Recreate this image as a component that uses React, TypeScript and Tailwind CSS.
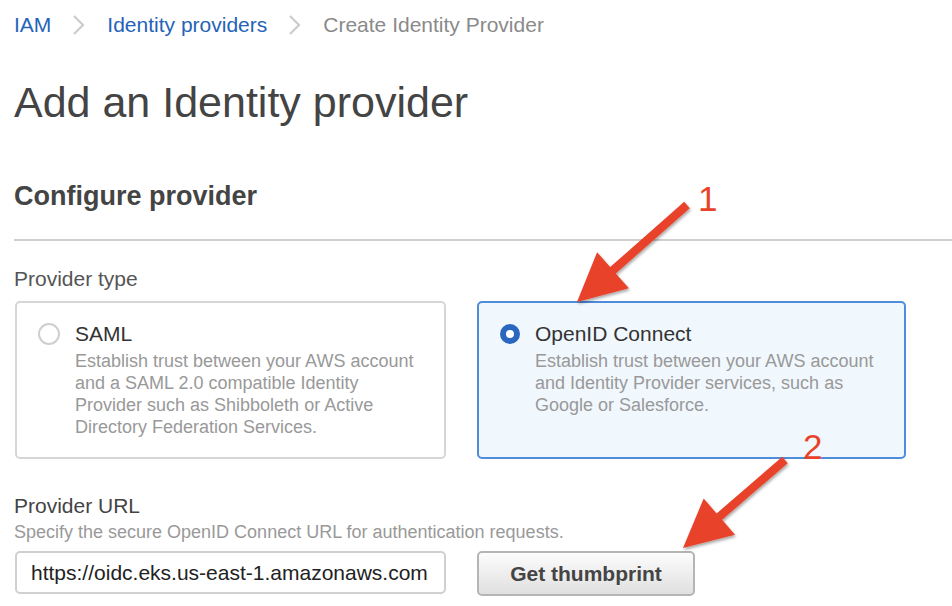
import React from "react";

type Pt = [number, number];

function arrowPoints(tail: Pt, tip: Pt, headLen: number, headHalf: number, shaftHalf: number): string {
  const dx = tip[0] - tail[0];
  const dy = tip[1] - tail[1];
  const len = Math.hypot(dx, dy);
  const ux = dx / len;
  const uy = dy / len;
  const nx = -uy;
  const ny = ux;
  const bx = tip[0] - ux * headLen;
  const by = tip[1] - uy * headLen;
  const pts: Pt[] = [
    [tail[0] + nx * shaftHalf, tail[1] + ny * shaftHalf],
    [bx + nx * shaftHalf, by + ny * shaftHalf],
    [bx + nx * headHalf, by + ny * headHalf],
    [tip[0], tip[1]],
    [bx - nx * headHalf, by - ny * headHalf],
    [bx - nx * shaftHalf, by - ny * shaftHalf],
    [tail[0] - nx * shaftHalf, tail[1] - ny * shaftHalf],
  ];
  return pts.map((p) => `${p[0].toFixed(1)},${p[1].toFixed(1)}`).join(" ");
}

function Chevron() {
  return (
    <svg width="13" height="22" viewBox="0 0 13 22" className="block">
      <path d="M2 2 L11 11 L2 20" fill="none" stroke="#cccccc" strokeWidth="2.2" />
    </svg>
  );
}

export default function App() {
  const a1 = arrowPoints([687, 205], [577, 302], 48, 24, 4.2);
  const a2 = arrowPoints([785, 460], [683, 548], 48, 24, 4.2);
  return (
    <div
      className="relative w-[952px] h-[606px] overflow-hidden bg-white pl-[14px]"
      style={{ fontFamily: '"Liberation Sans", Arial, Helvetica, sans-serif' }}
    >
      {/* Breadcrumb */}
      <div className="pt-[13px] flex items-center h-[37px] text-[21px] leading-[24px]">
        <span className="text-[#2563b8]">IAM</span>
        <span className="ml-[21px] mr-[22px]"><Chevron /></span>
        <span className="text-[#2563b8]">Identity providers</span>
        <span className="ml-[21px] mr-[22px]"><Chevron /></span>
        <span className="text-[#8a8a8a]">Create Identity Provider</span>
      </div>

      {/* Title */}
      <h1 className="mt-[41px] text-[43px] leading-[48px] text-[#444444] font-normal">
        Add an Identity provider
      </h1>

      <h2 className="mt-[54px] text-[27px] leading-[32px] font-bold text-[#444444]">
        Configure provider
      </h2>

      <div className="mt-[27px] h-[2px] bg-[#d0d0d0]" />

      <div className="mt-[26px] text-[21px] leading-[24px] text-[#555555]">Provider type</div>

      <div className="mt-[10px] ml-px grid grid-cols-[431px_429px] gap-x-[31px]">
        <div className="h-[158px] rounded-[5px] border-2 border-[#d6d6d6] bg-white flex pl-[21px] pt-[19px] pr-[16px]">
          <div className="mt-[1px] w-[22px] h-[22px] rounded-full border-2 border-[#cfcfcf] bg-white shrink-0" />
          <div className="ml-[15px]">
            <div className="text-[21px] leading-[24px] text-[#333333]">SAML</div>
            <div className="mt-[4px] text-[18px] leading-[22px] text-[#999999]">
              Establish trust between your AWS account and a SAML 2.0 compatible Identity Provider such as
              Shibboleth or Active Directory Federation Services.
            </div>
          </div>
        </div>
        <div className="h-[158px] rounded-[5px] border-2 border-[#4d8ddb] bg-[#f0f7fd] flex pl-[21px] pt-[19px] pr-[16px]">
          <div className="mt-[2px] w-[20px] h-[20px] rounded-full border-[6px] border-[#2b67bf] bg-white shrink-0" />
          <div className="ml-[15px]">
            <div className="text-[21px] leading-[24px] text-[#333333]">OpenID Connect</div>
            <div className="mt-[4px] text-[18px] leading-[22px] text-[#999999]">
              Establish trust between your AWS account and Identity Provider services, such as Google or
              Salesforce.
            </div>
          </div>
        </div>
      </div>

      <div className="mt-[35px] text-[21px] leading-[24px] text-[#444444]">Provider URL</div>
      <div className="mt-[3px] text-[18px] leading-[22px] text-[#999999] whitespace-nowrap">
        Specify the secure OpenID Connect URL for authentication requests.
      </div>

      <div className="mt-[8px] ml-px flex items-start gap-x-[31px]">
        <input
          readOnly
          value="https://oidc.eks.us-east-1.amazonaws.com/id/EXAMPLED539D4633E53DE1B716D3041E"
          className="w-[431px] h-[43px] rounded-[5px] border-2 border-[#d0d0d0] bg-white pl-[14px] pr-[16px] text-[21px] text-[#222222] outline-none"
          style={{ fontFamily: '"Liberation Sans", Arial, Helvetica, sans-serif' }}
        />
        <button
          type="button"
          className="w-[218px] h-[45px] rounded-[5px] border-2 border-[#b5b5b5] bg-gradient-to-b from-[#fcfcfc] to-[#e0e0e0] flex items-center justify-center text-[21px] leading-[24px] font-bold text-[#444444]"
          style={{ fontFamily: '"Liberation Sans", Arial, Helvetica, sans-serif' }}
        >
          Get thumbprint
        </button>
      </div>

      {/* Annotation overlay */}
      <svg className="absolute left-0 top-0 pointer-events-none" width="952" height="606" viewBox="0 0 952 606">
        <defs>
          <filter id="shadow" x="-20%" y="-20%" width="140%" height="140%">
            <feDropShadow dx="1" dy="2" stdDeviation="1.6" floodColor="#000" floodOpacity="0.35" />
          </filter>
        </defs>
        <polygon points={a1} fill="#e9422a" filter="url(#shadow)" />
        <polygon points={a2} fill="#e9422a" filter="url(#shadow)" />
      </svg>
      <div className="absolute left-[698px] top-[179px] text-[35px] leading-[40px] text-[#e9422a]">1</div>
      <div className="absolute left-[803px] top-[427px] text-[35px] leading-[40px] text-[#e9422a]">2</div>
    </div>
  );
}
